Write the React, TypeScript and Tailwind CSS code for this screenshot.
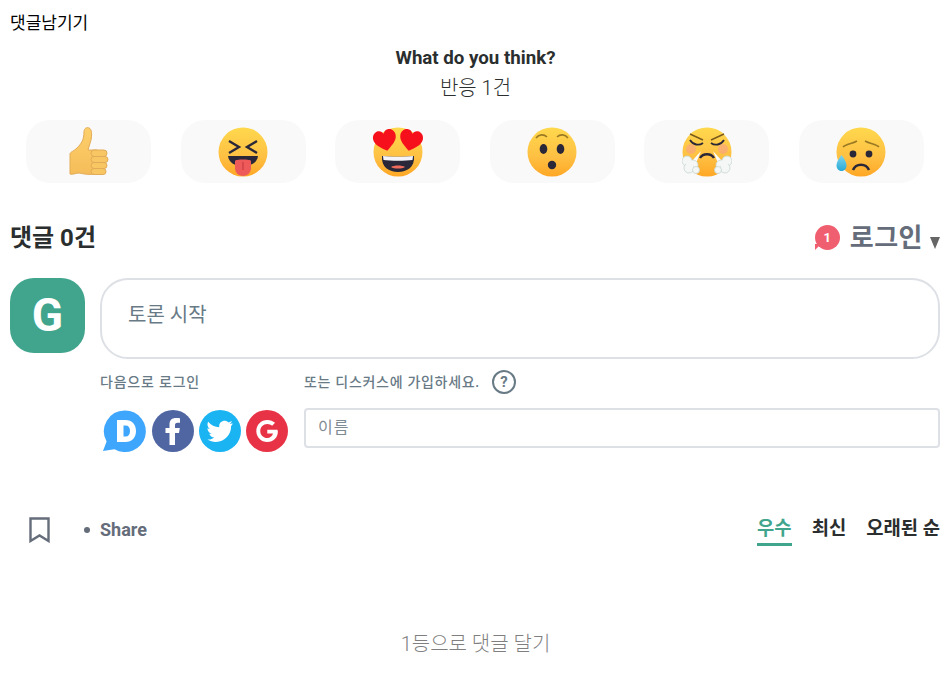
const reactions = ['thumb', 'squint', 'hearts', 'wow', 'steam', 'sad']

function FaceBase({ id, children }: { id: string; children?: React.ReactNode }) {
  return (
    <>
      <defs>
        <linearGradient id={id} x1="0" y1="0" x2="0" y2="1">
          <stop offset="0" stopColor="#ffd84d" />
          <stop offset="0.6" stopColor="#ffc043" />
          <stop offset="1" stopColor="#ffa726" />
        </linearGradient>
      </defs>
      <circle cx="25" cy="25" r="24.5" fill={`url(#${id})`} />
      {children}
    </>
  )
}

function Heart({ x, y, rotate }: { x: number; y: number; rotate: number }) {
  return (
    <path
      transform={`translate(${x} ${y}) rotate(${rotate})`}
      d="M0 11C-5 7-11.500 3-11.500-3C-11.500-7.500-8-10-5-10C-2.500-10-1-8.500 0-6.500C1-8.500 2.500-10 5-10C8-10 11.500-7.500 11.500-3C11.500 3 5 7 0 11Z"
      fill="#f5101c"
    />
  )
}

function Emoji({ name }: { name: string }) {
  if (name === 'thumb') {
    return (
      <svg width="50" height="50" viewBox="0 0 50 50">
        <defs>
          <linearGradient id="thumbFill" x1="0" y1="0" x2="0" y2="1">
            <stop offset="0" stopColor="#fdd06b" />
            <stop offset="1" stopColor="#f5bd5a" />
          </linearGradient>
        </defs>
        <path
          d="M6 47V27C6 25 10 24 13 21C17 17 20 13 20 5C20 1 23 0 25 1C28 2 28 8 27 13C26 16 25 20 24 23H33V47C25 48 20 47 15 46C12 46 8 48 6 47Z"
          fill="url(#thumbFill)"
          stroke="#e2ab57"
          strokeWidth="1"
        />
        <rect x="27" y="23" width="16" height="6.500" rx="3.200" fill="#f8c662" stroke="#e2ab57" />
        <rect x="27" y="29.500" width="17" height="6" rx="3" fill="#f8c662" stroke="#e2ab57" />
        <rect x="27" y="35.500" width="16" height="6" rx="3" fill="#f8c662" stroke="#e2ab57" />
        <rect x="27" y="41.500" width="15" height="6" rx="3" fill="#f8c662" stroke="#e2ab57" />
      </svg>
    )
  }
  if (name === 'squint') {
    return (
      <svg width="50" height="50" viewBox="0 0 50 50">
        <FaceBase id="faceSquint">
          <path d="M11 14L21 20L11 26" fill="none" stroke="#2a2838" strokeWidth="2.400" />
          <path d="M39 14L29 20L39 26" fill="none" stroke="#2a2838" strokeWidth="2.400" />
          <path d="M10 29H40C39 36 33 39 25 39C17 39 11 36 10 29Z" fill="#2a2838" />
          <path d="M17 34C17 32 33 32 33 34V41C33 46 29 49 25 49C21 49 17 46 17 41Z" fill="#ee5a5a" />
          <path d="M25 35V43" stroke="#c93c42" strokeWidth="1.200" />
        </FaceBase>
      </svg>
    )
  }
  if (name === 'hearts') {
    return (
      <svg width="50" height="50" viewBox="0 0 50 50" overflow="visible">
        <FaceBase id="faceHearts">
          <path d="M9 29C17 30 33 30 41 29C42 40 34 45 25 45C16 45 8 40 9 29Z" fill="#2a2838" />
          <path d="M10 29C17 30 33 30 40 29L39.500 33C33 34 17 34 10.500 33Z" fill="#f4f4f8" />
          <path d="M18 40C21 38 29 38 32 40C29 42 21 42 18 40Z" fill="#ef6b5d" />
        </FaceBase>
        <Heart x={12} y={13} rotate={-12} />
        <Heart x={38} y={13} rotate={12} />
      </svg>
    )
  }
  if (name === 'wow') {
    return (
      <svg width="50" height="50" viewBox="0 0 50 50">
        <FaceBase id="faceWow">
          <path d="M9 11C12 7 17 7 20 10" fill="none" stroke="#9b7a24" strokeWidth="1.600" />
          <path d="M30 10C33 7 38 7 41 11" fill="none" stroke="#9b7a24" strokeWidth="1.600" />
          <ellipse cx="16.500" cy="22" rx="3.800" ry="5" fill="#2a2838" />
          <ellipse cx="33.500" cy="22" rx="3.800" ry="5" fill="#2a2838" />
          <circle cx="25" cy="38" r="4.200" fill="#2a2838" />
        </FaceBase>
      </svg>
    )
  }
  if (name === 'steam') {
    return (
      <svg width="50" height="50" viewBox="0 0 50 50">
        <FaceBase id="faceSteam">
          <circle cx="9" cy="22" r="5" fill="#f6a08a" opacity="0.6" />
          <circle cx="41" cy="22" r="5" fill="#f6a08a" opacity="0.6" />
          <path d="M8 7L21 13" stroke="#7a5a1c" strokeWidth="1.400" fill="none" />
          <path d="M42 7L29 13" stroke="#7a5a1c" strokeWidth="1.400" fill="none" />
          <path d="M8 13C11 18 17 19 21 16" stroke="#2a2838" strokeWidth="1.800" fill="none" />
          <path d="M42 13C39 18 33 19 29 16" stroke="#2a2838" strokeWidth="1.800" fill="none" />
          <path d="M18 31C21 26 29 26 32 31" stroke="#2a2838" strokeWidth="2.400" fill="none" />
          <path d="M19 24L10 34L14 36Z" fill="#ffffff" />
          <path d="M31 24L40 34L36 36Z" fill="#ffffff" />
          <g fill="#f4f7f6" stroke="#c6d6d2" strokeWidth="0.800">
            <circle cx="5" cy="34" r="5" />
            <circle cx="11" cy="38" r="5" />
            <circle cx="7" cy="41" r="5" />
            <circle cx="14" cy="43" r="3.500" />
            <circle cx="45" cy="34" r="5" />
            <circle cx="39" cy="38" r="5" />
            <circle cx="43" cy="41" r="5" />
            <circle cx="36" cy="43" r="3.500" />
          </g>
          <g fill="#f4f7f6">
            <circle cx="8" cy="37" r="4" />
            <circle cx="42" cy="37" r="4" />
          </g>
        </FaceBase>
      </svg>
    )
  }
  return (
    <svg width="50" height="50" viewBox="0 0 50 50">
      <FaceBase id="faceSad">
        <defs>
          <linearGradient id="tearFill" x1="0" y1="0" x2="0" y2="1">
            <stop offset="0" stopColor="#7fd6ee" />
            <stop offset="1" stopColor="#28a9d6" />
          </linearGradient>
        </defs>
        <path d="M7 20C10 17 16 17 21 14" fill="none" stroke="#9b7a24" strokeWidth="1.600" />
        <path d="M43 20C40 17 34 17 29 14" fill="none" stroke="#9b7a24" strokeWidth="1.600" />
        <circle cx="17" cy="27" r="3.400" fill="#2a2838" />
        <circle cx="33" cy="27" r="3.400" fill="#2a2838" />
        <path d="M17 43C20 36 30 36 33 43" fill="none" stroke="#2a2838" strokeWidth="2.600" />
        <path d="M5.500 28C8.500 32 10.500 35 10.500 38.500C10.500 41.500 8.500 44 5.500 44C2.500 44 0.500 41.500 0.500 38.500C0.500 35 2.500 32 5.500 28Z" fill="url(#tearFill)" />
      </FaceBase>
    </svg>
  )
}

function SocialIcons() {
  return (
    <div className="flex gap-[3px] pl-[4px]">
      {/* Disqus */}
      <svg width="44" height="44" viewBox="0 0 44 44" overflow="visible">
        <g transform="translate(-2 0)">
          <path d="M23 1.500A20.800 20.800 0 1 1 12.500 40.200L1 42L4.600 32.500A20.800 20.800 0 0 1 23 1.500Z" fill="#3ea7fd" />
          <path d="M15 11H23.500C30 11 34 15.500 34 22C34 28.500 30 33 23.500 33H15ZM21.500 16.500V27.500H23.500C26.500 27.500 28 25.500 28 22C28 18.500 26.500 16.500 23.500 16.500Z" fill="#ffffff" fillRule="evenodd" />
        </g>
      </svg>
      <svg width="44" height="44" viewBox="0 0 44 44">
        <circle cx="22" cy="22" r="21" fill="#5066a3" />
        <path d="M18.500 36V24H14.500V19H18.500V15.500C18.500 11 21 9 25 9C27 9 28.500 9.200 29 9.300V13.800H26.500C24.500 13.800 24 14.800 24 16.200V19H28.800L28 24H24V36Z" fill="#ffffff" />
      </svg>
      <svg width="44" height="44" viewBox="0 0 44 44">
        <circle cx="22" cy="22" r="21" fill="#1ab4f3" />
        <path d="M34.500 14.300C33.600 14.700 32.600 15 31.500 15.100C32.600 14.400 33.500 13.400 33.900 12.100C32.900 12.700 31.700 13.200 30.500 13.400C29.500 12.300 28.100 11.700 26.600 11.700C23.600 11.700 21.200 14.100 21.200 17.100C21.200 17.500 21.200 17.900 21.300 18.300C16.800 18.100 12.900 15.900 10.200 12.700C9.700 13.500 9.500 14.400 9.500 15.400C9.500 17.300 10.500 18.900 11.900 19.900C11 19.900 10.200 19.600 9.400 19.200V19.300C9.400 21.900 11.300 24.100 13.700 24.600C12.900 24.800 12 24.900 11.300 24.700C12 26.800 14 28.400 16.300 28.400C14.400 29.900 12.100 30.700 9.500 30.400C11.900 32 14.700 32.900 17.800 32.900C27.700 32.900 33.100 24.700 33.100 17.600V16.900C34.100 16.200 34.600 15.200 34.500 14.300Z" fill="#ffffff" />
      </svg>
      <svg width="44" height="44" viewBox="0 0 44 44">
        <circle cx="22" cy="22" r="21" fill="#e83346" />
        <path
          transform="translate(2.500 2.600) scale(0.88)"
          d="M34 20.500H22.500V25H29C28 28.500 25.500 30 22.500 30C18 30 14.500 26.500 14.500 22C14.500 17.500 18 14 22.500 14C24.700 14 26.500 14.800 28 16.100L31.300 12.800C29 10.700 26 9.500 22.500 9.500C15.500 9.500 10 15 10 22C10 29 15.500 34.500 22.500 34.500C29.500 34.500 34.500 29.500 34.500 22.500C34.500 21.800 34.200 21.200 34 20.500Z"
          fill="#ffffff"
        />
      </svg>
    </div>
  )
}

export default function App() {
  return (
    <div className="h-[687px] w-[951px] overflow-hidden bg-white font-['Roboto','Noto_Sans_CJK_KR',sans-serif]">
      <div className="pl-[10px] pt-[11px] text-[17px] leading-[24px] text-black">댓글남기기</div>

      {/* Reactions */}
      <div className="mt-[9px] text-center text-[18.7px] font-bold leading-[28px] text-[#2a2e2e]">What do you think?</div>
      <div className="mt-[1px] text-center text-[20px] font-light leading-[30px] text-[#2a2e2e]">반응 1건</div>
      <div className="mt-[17px] flex justify-between pl-[26px] pr-[27px]">
        {reactions.map((name) => (
          <div key={name} className="flex h-[63px] w-[125px] items-center justify-center rounded-[24px] bg-[#f9f9f9]">
            <Emoji name={name} />
          </div>
        ))}
      </div>

      {/* Header */}
      <div className="mt-[37px] flex h-[36px] items-center justify-between pl-[10px] pr-[11px]">
        <div className="text-[24px] font-bold leading-[36px] text-[#2a2e2e]">댓글 0건</div>
        <div className="flex items-center">
          <div className="relative -mt-[1px] flex size-[25px] items-center justify-center rounded-full bg-[#f05f70] text-[13px] font-bold text-white">
            1
            <span className="absolute bottom-0 left-0 size-0 border-r-[6px] border-t-[6px] border-r-transparent border-t-[#f05f70]" />
          </div>
          <span className="ml-[10px] text-[26px] font-bold leading-[36px] tracking-[0.5px] text-[#656c7a]">로그인</span>
          <span className="ml-[7px] mt-[10px] size-0 border-x-[5.500px] border-t-[12px] border-x-transparent border-t-[#666666]" />
        </div>
      </div>

      {/* Composer */}
      <div className="mt-[22px] flex gap-[15px] pl-[10px] pr-[11px]">
        <div className="flex size-[75px] shrink-0 items-center justify-center rounded-[24px] bg-[#41a58d] text-[46px] font-bold text-white">G</div>
        <div className="flex-1">
          <div className="flex h-[81px] items-center rounded-[28px] border-2 border-[#dde0e5] px-[26px] pb-[7px] text-[20px] text-[#687a86]">토론 시작</div>
          <div className="mt-[11px] flex">
            <div className="w-[204px] shrink-0">
              <div className="flex h-[24px] items-center text-[14px] font-medium tracking-[0.8px] text-[#687a86]">다음으로 로그인</div>
              <div className="mt-[15px]">
                <SocialIcons />
              </div>
            </div>
            <div className="flex-1">
              <div className="flex h-[24px] items-center text-[14px] font-medium tracking-[0.7px] text-[#687a86]">
                또는 디스커스에 가입하세요.
                <span className="ml-[12px] flex size-[24px] items-center justify-center rounded-full border-2 border-[#687a86] text-[15px] font-bold tracking-normal text-[#687a86]">?</span>
              </div>
              <div className="mt-[14px] flex h-[40px] items-center rounded-[4px] border-2 border-[#dde0e5] px-[12px] text-[16px] tracking-[1px] text-[#7f8b93]">이름</div>
            </div>
          </div>
        </div>
      </div>

      {/* Toolbar */}
      <div className="mt-[59px] flex items-start justify-between pl-[29px] pr-[11px]">
        <div className="flex h-[36px] items-center">
          <svg width="21" height="26" viewBox="0 0 21 26" fill="none">
            <path d="M1.500 1.500H19.500V24L10.500 18.500L1.500 24Z" stroke="#656c7a" strokeWidth="2.400" />
          </svg>
          <span className="ml-[34px] size-[6px] rounded-full bg-[#656c7a]" />
          <span className="ml-[10px] -mt-[2px] text-[18px] font-bold text-[#656c7a]">Share</span>
        </div>
        <div className="flex gap-[20px] text-[18.8px] font-bold text-[#2a2e2e]">
          <span className="h-[34px] border-b-[3px] border-[#41a58d] leading-[34px] text-[#41a58d]">우수</span>
          <span className="leading-[34px]">최신</span>
          <span className="leading-[34px]">오래된 순</span>
        </div>
      </div>

      <div className="mt-[81px] text-center text-[20px] font-light leading-[30px] text-[#7f7f7f]">1등으로 댓글 달기</div>
    </div>
  )
}
